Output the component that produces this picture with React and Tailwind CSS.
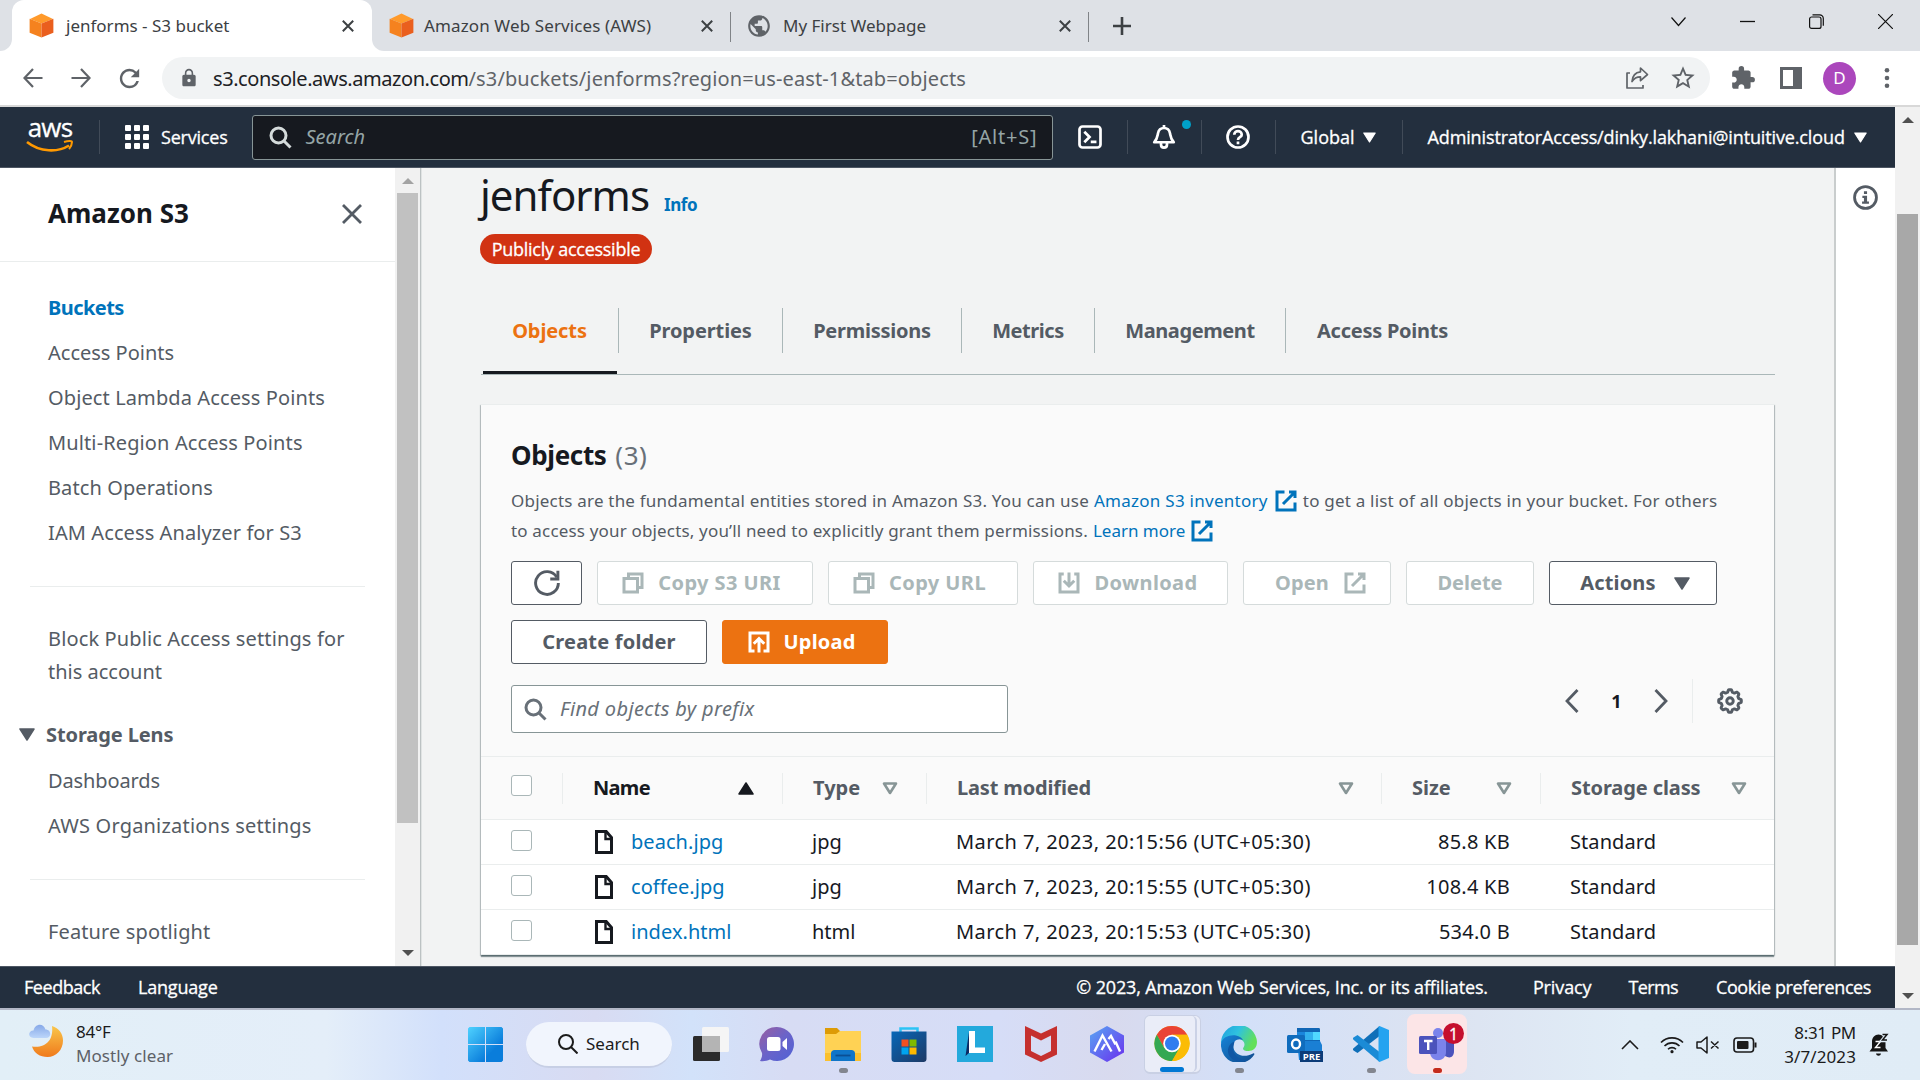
import React from 'react';
import { MdExtension, MdStarBorder, MdLock, MdPublic, MdRefresh } from 'react-icons/md';

/* ---------- icons ---------- */

const Icon = ({ className = 'w-6 h-6', sw = 2, children }) => (
  <svg viewBox="0 0 16 16" className={`shrink-0 ${className}`} fill="none" stroke="currentColor" strokeWidth={sw}>
    {children}
  </svg>
);

const SearchGlyph = ({ className }) => (
  <Icon className={className}>
    <circle cx="7" cy="7" r="5" />
    <path d="m15 15-4.5-4.5" />
  </Icon>
);

const External = ({ className }) => (
  <Icon className={className}>
    <path d="M10 2h4v4M6 10l8-8M14 9.05V14H2V2h5" />
  </Icon>
);

const CopyGlyph = () => (
  <Icon>
    <path d="M2 5h9v9H2z" />
    <path d="M5 5V2h9v9h-3" />
  </Icon>
);

const FileGlyph = () => (
  <Icon className="w-6 h-6 text-[#16191f]">
    <path d="M3 1h6.5L13 5v10H3z" />
    <path d="M9 1v5h4" strokeWidth="1.6" />
  </Icon>
);

const Cube = () => (
  <svg viewBox="0 0 24 24" className="w-[25px] h-[25px] shrink-0">
    <path d="M12 .5 23 5.8 12 10 1 5.8z" fill="#ff9a2b" />
    <path d="M.6 5.5 12 10v13.6L.6 19z" fill="#f5821f" />
    <path d="M23.4 5.5 12 10v13.6L23.4 19z" fill="#ea5f1e" />
  </svg>
);

const TabClose = () => (
  <svg viewBox="0 0 12 12" className="w-3 h-3 shrink-0" stroke="#3c4043" strokeWidth="2">
    <path d="m.8.8 10.4 10.4M11.2.8.8 11.2" />
  </svg>
);

const Caret = ({ className }) => (
  <svg viewBox="0 0 16 13" className={`shrink-0 ${className}`} fill="currentColor" stroke="currentColor" strokeWidth="1.5" strokeLinejoin="round">
    <path d="M1 1h14L8 12z" />
  </svg>
);

const SortIdle = () => (
  <svg viewBox="0 0 16 13" className="w-4 h-[13px] shrink-0 text-[#879596]" fill="none" stroke="currentColor" strokeWidth="2.6" strokeLinejoin="round">
    <path d="M2 1.5h12L8 11z" />
  </svg>
);

const gearPath = (() => {
  const pts = [];
  for (let i = 0; i < 96; i++) {
    const a = (i / 96) * Math.PI * 2;
    const r = 6.25 + 0.75 * Math.tanh(2.4 * Math.cos(8 * a));
    pts.push(`${(8 + r * Math.sin(a)).toFixed(2)} ${(8 - r * Math.cos(a)).toFixed(2)}`);
  }
  return 'M' + pts.join('L') + 'Z';
})();

/* ---------- browser chrome ---------- */

const TabStrip = () => (
  <div className="flex h-[51px] bg-[#dee1e6] font-['Noto_Sans'] text-[17px] text-[#3c4043]">
    <div className="w-3 h-full bg-white">
      <div className="w-3 h-full rounded-br-[12px] bg-[#dee1e6]" />
    </div>
    <div className="flex w-[360px] items-center rounded-t-[12px] bg-white pl-[17px] pr-[18px]">
      <Cube />
      <span className="ml-3 flex-1 whitespace-nowrap">jenforms - S3 bucket</span>
      <TabClose />
    </div>
    <div className="w-3 h-full bg-white">
      <div className="w-3 h-full rounded-bl-[12px] bg-[#dee1e6]" />
    </div>
    <div className="flex w-[346px] items-center pl-[5px] pr-[17px]">
      <Cube />
      <span className="ml-[10px] flex-1 whitespace-nowrap tracking-[0.12px]">Amazon Web Services (AWS)</span>
      <TabClose />
    </div>
    <div className="mt-3 h-[30px] w-px bg-[#808387]" />
    <div className="flex w-[357px] items-center pl-[15px] pr-[17px]">
      <MdPublic className="h-[26px] w-[26px] text-[#5f6368]" />
      <span className="ml-[11px] flex-1 whitespace-nowrap">My First Webpage</span>
      <TabClose />
    </div>
    <div className="mt-3 h-[30px] w-px bg-[#808387]" />
    <svg viewBox="0 0 18 18" className="ml-6 mt-[17px] h-[18px] w-[18px]" stroke="#3c4043" strokeWidth="2.6">
      <path d="M9 0v18M0 9h18" />
    </svg>
    <div className="ml-auto flex items-start gap-[54px] pr-[27px] pt-[14px] text-[#111]">
      <svg viewBox="0 0 15 15" className="h-[15px] w-[15px]" fill="none" stroke="currentColor" strokeWidth="1.2">
        <path d="m.5 3.5 7 8 7-8" />
      </svg>
      <svg viewBox="0 0 15 15" className="h-[15px] w-[15px]" stroke="currentColor" strokeWidth="1.3">
        <path d="M0 7.5h15" />
      </svg>
      <svg viewBox="0 0 15 15" className="h-[15px] w-[15px]" fill="none" stroke="currentColor" strokeWidth="1.2">
        <rect x=".6" y="3" width="11.4" height="11.4" rx="2" />
        <path d="M3.5.8h7.2a3.6 3.6 0 0 1 3.6 3.6v7.4" />
      </svg>
      <svg viewBox="0 0 15 15" className="h-[15px] w-[15px]" stroke="currentColor" strokeWidth="1.2">
        <path d="m0 0 15 15M15 0 0 15" />
      </svg>
    </div>
  </div>
);

const Toolbar = () => (
  <div className="flex h-14 items-center border-b-2 border-[#d8d8d8] bg-white pl-[23px] text-[#5f6368]">
    <svg viewBox="0 0 20 20" className="h-5 w-5" fill="none" stroke="currentColor" strokeWidth="2.2">
      <path d="M19.5 10H1.5M10 1 1.5 10l8.5 9" />
    </svg>
    <svg viewBox="0 0 20 20" className="ml-7 h-5 w-5" fill="none" stroke="currentColor" strokeWidth="2.2">
      <path d="M.5 10h18M10 1l8.500 9-8.500 9" />
    </svg>
    <MdRefresh className="ml-[24px] h-[29px] w-[29px]" />
    <div className="ml-[18px] flex h-[42px] w-[1548px] items-center rounded-full bg-[#f1f3f4] pl-[17px] pr-[13px]">
      <MdLock className="h-[20px] w-[20px]" />
      <div className="ml-[14px] flex-1 whitespace-nowrap pt-px font-['Noto_Sans'] text-[20px] leading-none">
        <span className="text-[#202124] tracking-[-0.44px]">s3.console.aws.amazon.com</span>
        <span className="tracking-[0.12px]">/s3/buckets/jenforms?region=us-east-1&amp;tab=objects</span>
      </div>
      <svg viewBox="0 0 24 24" className="h-6 w-6" fill="none" stroke="currentColor" strokeWidth="1.7" strokeLinejoin="round">
        <path d="M5 7H2v15h16v-3" />
        <path d="M15.500 2 22.500 8.500l-7 6.200v-3.800c-4 0-6.500 1.300-8.500 4.700.3-5 3-9.200 8.500-9.800z" />
      </svg>
      <MdStarBorder className="ml-[20px] h-[28px] w-[28px]" />
    </div>
    <MdExtension className="ml-[20px] h-[26px] w-[26px]" />
    <svg viewBox="0 0 22 22" className="ml-[24px] h-[22px] w-[22px]">
      <path d="M0 0h22v22H0zM3 3v16h10V3z" fill="currentColor" fillRule="evenodd" />
    </svg>
    <div className="ml-[21px] flex h-[33px] w-[33px] items-center justify-center rounded-full bg-[#ab47bc] font-['Noto_Sans'] text-[17px] text-white">D</div>
    <svg viewBox="0 0 6 20" className="ml-[28px] h-5 w-[6px]" fill="currentColor">
      <circle cx="3" cy="2.300" r="2.300" />
      <circle cx="3" cy="10" r="2.300" />
      <circle cx="3" cy="17.700" r="2.300" />
    </svg>
  </div>
);

/* ---------- AWS console ---------- */

const NavDivider = ({ className }) => <div className={`h-[34px] w-px bg-[#414b58] ${className}`} />;

const ConsoleNav = () => (
  <div className="flex h-[61px] items-center border-b border-[#4d5663] bg-[#232f3e] font-['Open_Sans'] text-[18px] font-medium text-white [-webkit-text-stroke:0.3px]">
    <div className="ml-[25px] flex w-[50px] flex-col items-center">
      <span className="h-[19px] font-['Open_Sans'] text-[26px] leading-[13px] tracking-[-0.8px]">aws</span>
      <svg viewBox="0 0 48 13" className="h-[13px] w-12" fill="none" stroke="#ff9900">
        <path d="M1 2c13 10.500 31 10.500 42 3.500" strokeWidth="2.600" />
        <path d="M38 2c5-1.500 8-1 8 0s-.5 4-3 7" strokeWidth="2" />
      </svg>
    </div>
    <NavDivider className="ml-[24px]" />
    <div className="ml-[25px] grid grid-cols-3 gap-[3px]">
      {[...Array(9)].map((_, i) => (
        <div key={i} className="h-[6px] w-[6px] rounded-[1px] bg-white" />
      ))}
    </div>
    <span className="ml-[12px] tracking-[-0.21px]">Services</span>
    <div className="ml-[24px] flex h-[45px] w-[801px] items-center rounded-[3px] border border-[#879596] bg-[#16191f] pl-[15px] pr-[14px] font-normal text-[#95a5a6] [-webkit-text-stroke:0]">
      <SearchGlyph className="h-6 w-6 text-[#d5dbdb]" />
      <span className="ml-[14px] flex-1 font-['Noto_Sans'] text-[20px] italic">Search</span>
      <span className="font-['Noto_Sans'] text-[20px] tracking-[0.8px]">[Alt+S]</span>
    </div>
    <Icon className="ml-[25px] h-6 w-6" sw={1.8}>
      <rect x="1" y="1" width="14" height="14" rx="2" />
      <path d="M4.200 4.500 7.700 8l-3.500 3.500M8.500 11.200h3.800" />
    </Icon>
    <NavDivider className="ml-[25px]" />
    <div className="relative ml-[24px]">
      <Icon sw={1.8}>
        <path d="M8 0v2M1.500 11.500h13C12.500 9.500 12.500 8 12 5.500 11.500 3 10 2 8 2S4.500 3 4 5.500C3.500 8 3.500 9.500 1.500 11.500z" strokeLinejoin="round" />
        <path d="M6 12v1c0 2.800 4 2.800 4 0v-1" />
      </Icon>
      <div className="absolute -top-[5px] left-[30px] h-[9px] w-[9px] rounded-full bg-[#00a1c9]" />
    </div>
    <NavDivider className="ml-[25px]" />
    <Icon className="ml-[24px] h-6 w-6" sw={1.8}>
      <circle cx="8" cy="8" r="7" />
      <path d="M5.500 6.500c0-3.300 5-3.300 5 0C10.500 8.300 8 8 8 10M8 11v1.800" />
    </Icon>
    <NavDivider className="ml-[25px]" />
    <span className="ml-[25px]">Global</span>
    <Caret className="ml-[8px] h-[11px] w-[13px]" />
    <NavDivider className="ml-[26px]" />
    <span className="ml-[25px] whitespace-nowrap tracking-[-0.13px]">AdministratorAccess/dinky.lakhani@intuitive.cloud</span>
    <Caret className="ml-[9px] h-[11px] w-[13px]" />
  </div>
);

const Sidebar = () => (
  <div className="flex h-full w-[422px] shrink-0">
    <div className="h-full w-[395px] overflow-hidden bg-white font-['Noto_Sans'] text-[20px] leading-[33px] text-[#545b64]">
      <div className="flex h-[94px] items-center justify-between border-b border-[#eaeded] pb-[2px] pl-12 pr-[33px]">
        <span className="text-[26px] font-bold text-[#16191f]">Amazon S3</span>
        <svg viewBox="0 0 20 20" className="h-5 w-5" stroke="currentColor" strokeWidth="2.8">
          <path d="m1 1 18 18M19 1 1 19" />
        </svg>
      </div>
      <div className="flex flex-col gap-3 whitespace-nowrap pl-12 pt-[29px]">
        <span className="font-bold tracking-[-0.55px] text-[#0073bb]">Buckets</span>
        <span className="tracking-[0px]">Access Points</span>
        <span className="tracking-[0.11px]">Object Lambda Access Points</span>
        <span className="tracking-[0.12px]">Multi-Region Access Points</span>
        <span className="tracking-[0.1px]">Batch Operations</span>
        <span className="tracking-[0.1px]">IAM Access Analyzer for S3</span>
      </div>
      <div className="mx-[30px] mt-[37px] h-px bg-[#eaeded]" />
      <div className="mt-[35px] w-[330px] pl-12">
        <span className="whitespace-nowrap tracking-[0.13px]">Block Public Access settings for</span> this account
      </div>
      <div className="mt-[30px] flex items-center pl-[19px] font-bold">
        <Caret className="h-[13px] w-4" />
        <span className="ml-[11px] tracking-[-0.1px]">Storage Lens</span>
      </div>
      <div className="mt-[13px] flex flex-col gap-3 whitespace-nowrap pl-12">
        <span className="tracking-[-0.12px]">Dashboards</span>
        <span className="tracking-[0.2px]">AWS Organizations settings</span>
      </div>
      <div className="mx-[30px] mt-[37px] h-px bg-[#eaeded]" />
      <div className="mt-[35px] whitespace-nowrap pl-12 tracking-[0.13px]">Feature spotlight</div>
    </div>
    <div className="flex h-full w-[25px] flex-col items-center bg-[#f1f1f1] pt-[10px]">
      <svg viewBox="0 0 12 6" className="h-[6px] w-3" fill="#a3a3a3">
        <path d="M0 6 6 0l6 6z" />
      </svg>
      <div className="mt-[9px] h-[630px] w-[21px] bg-[#c1c1c1]" />
      <svg viewBox="0 0 12 6" className="mt-[127px] h-[6px] w-3" fill="#505050">
        <path d="M0 0h12L6 6z" />
      </svg>
    </div>
    <div className="h-full w-px bg-[#bcc2c3]" />
    <div className="h-full w-px bg-[#e0e3e3]" />
  </div>
);

const tabs = [
  ['Objects', 'w-[138px] text-[#ec7211] tracking-[-0.1px]'],
  ['Properties', 'w-[164px] tracking-[-0.1px]'],
  ['Permissions', 'w-[179px] tracking-[-0.25px]'],
  ['Metrics', 'w-[133px] tracking-[-0.45px]'],
  ['Management', 'w-[191px] tracking-[-0.4px]'],
  ['Access Points', 'w-[193px] tracking-[-0.26px]'],
];

const Button = ({ className = '', tone = 'disabled', children }) => {
  const tones = {
    disabled: 'border-[#d5dbdb] bg-white text-[#aab7b8]',
    normal: 'border-[#545b64] bg-white text-[#545b64]',
    primary: 'border-[#ec7211] bg-[#ec7211] text-white',
  };
  return (
    <div className={`flex h-[44px] items-center justify-center whitespace-nowrap rounded-[3px] border text-[20px] font-bold ${tones[tone]} ${className}`}>
      {children}
    </div>
  );
};

const Checkbox = () => <div className="h-[21px] w-[21px] rounded-[3px] border-[1.5px] border-[#aab7b8] bg-white" />;

const gridCols = 'grid grid-cols-[81px_220px_144px_455px_159px_1fr]';

const HeadCell = ({ className = '', children }) => (
  <div className={`my-auto flex h-[31px] items-center justify-between border-l border-[#eaeded] pl-[30px] ${className}`}>{children}</div>
);

const rows = [
  ['beach.jpg', 'jpg', 'March 7, 2023, 20:15:56 (UTC+05:30)', '85.8 KB'],
  ['coffee.jpg', 'jpg', 'March 7, 2023, 20:15:55 (UTC+05:30)', '108.4 KB'],
  ['index.html', 'html', 'March 7, 2023, 20:15:53 (UTC+05:30)', '534.0 B'],
];

const ObjectsCard = () => (
  <div className="mt-[29px] w-[1293px] border-t border-[#eaeded] bg-white shadow-[0_2px_1px_0_rgba(0,28,36,0.4),1px_1px_1px_0_rgba(0,28,36,0.2),-1px_1px_1px_0_rgba(0,28,36,0.2)]">
    <div className="h-[351px] bg-[#fafafa] pl-[30px] pt-[32px] text-[#545b64]">
      <div className="text-[26px] leading-[36px]">
        <span className="font-bold tracking-[-0.35px] text-[#16191f]">Objects</span>{' '}
        <span className="ml-[2px] tracking-[0.5px] text-[#687078]">(3)</span>
      </div>
      <div className="mt-[13px] whitespace-nowrap text-[17px] leading-[30px]">
        <div className="flex items-center">
          <span className="tracking-[0.21px]">Objects are the fundamental entities stored in Amazon S3. You can use</span>
          <span className="ml-[5px] tracking-[0.27px] text-[#0073bb]">Amazon S3 inventory</span>
          <External className="ml-[6px] h-6 w-6 text-[#0073bb]" />
          <span className="ml-[5px] tracking-[0.21px]">to get a list of all objects in your bucket. For others</span>
        </div>
        <div className="flex items-center">
          <span className="tracking-[0.17px]">to access your objects, you’ll need to explicitly grant them permissions.</span>
          <span className="ml-[5px] text-[#0073bb]">Learn more</span>
          <External className="ml-[5px] h-6 w-6 text-[#0073bb]" />
        </div>
      </div>
      <div className="mt-[15px] flex gap-[15px]">
        <Button tone="normal" className="w-[71px]">
          <Icon className="h-[26px] w-[26px]" sw={1.8}>
            <path d="M10 5.500h4.700V.500" />
            <path d="M15 8a7 7 0 1 1-1-3.600" />
          </Icon>
        </Button>
        <Button className="w-[216px] gap-[13px] pr-[8px] tracking-[0.42px]"><CopyGlyph />Copy S3 URI</Button>
        <Button className="w-[190px] gap-[13px] pr-[8px] tracking-[0.42px]"><CopyGlyph />Copy URL</Button>
        <Button className="w-[195px] gap-[14px] pr-[7px] tracking-[0.38px]">
          <Icon>
            <path d="M4.500 2H2v12h12V2h-2.500M8 1v9M4.500 6.500 8 10l3.500-3.500" />
          </Icon>
          Download
        </Button>
        <Button className="w-[148px] gap-[14px] pl-[8px] tracking-[0.15px]">Open<External className="h-6 w-6" /></Button>
        <Button className="w-[128px]">Delete</Button>
        <Button tone="normal" className="w-[168px] gap-[18px] pl-[4px] tracking-[0.16px]">Actions<Caret className="h-[13px] w-4" /></Button>
      </div>
      <div className="mt-[15px] flex gap-[15px]">
        <Button tone="normal" className="w-[196px] tracking-[0.2px]">Create folder</Button>
        <Button tone="primary" className="w-[166px] gap-[13px] pr-[8px] tracking-[0.19px]">
          <Icon>
            <path d="M5 14H2V2h12v12h-3M8 15V6M4.500 9.200 8 5.700l3.500 3.500" />
          </Icon>
          Upload
        </Button>
      </div>
      <div className="mt-[21px] flex h-[48px]">
        <div className="flex h-[48px] w-[497px] items-center rounded-[3px] border border-[#879596] bg-white pl-[11px] text-[20px] italic tracking-[0.36px] text-[#687078]">
          <SearchGlyph className="h-6 w-6 text-[#687078]" />
          <span className="ml-[13px]">Find objects by prefix</span>
        </div>
        <div className="ml-[557px] flex h-[32px] items-center">
          <svg viewBox="0 0 14 24" className="h-6 w-[14px]" fill="none" stroke="#545b64" strokeWidth="2.800">
            <path d="M12.500 1 2 12l10.500 11" />
          </svg>
          <span className="w-[75px] text-center text-[18px] font-bold text-[#16191f]">1</span>
          <svg viewBox="0 0 14 24" className="h-6 w-[14px]" fill="none" stroke="#545b64" strokeWidth="2.800">
            <path d="M1.500 1 12 12 1.500 23" />
          </svg>
          <div className="ml-[24px] h-[44px] w-px bg-[#eaeded]" />
          <Icon className="ml-[24px] h-[26px] w-[26px] text-[#545b64]" sw={1.8}>
            <path d={gearPath} strokeLinejoin="round" />
            <circle cx="8" cy="8" r="2" />
          </Icon>
        </div>
      </div>
    </div>
    <div className={`${gridCols} h-[64px] border-y border-[#eaeded] bg-[#fafafa] text-[20px] font-bold text-[#545b64]`}>
      <div className="flex items-center pb-[6px] pl-[30px]"><Checkbox /></div>
      <HeadCell className="pr-[28px] text-[#16191f]">
        <span className="tracking-[-0.7px]">Name</span>
        <Caret className="h-[13px] w-4 rotate-180" />
      </HeadCell>
      <HeadCell className="pr-[28px]">Type<SortIdle /></HeadCell>
      <HeadCell className="pr-[27px]"><span className="tracking-[-0.15px]">Last modified</span><SortIdle /></HeadCell>
      <HeadCell className="pr-[28px]">Size<SortIdle /></HeadCell>
      <HeadCell className="pr-[27px]"><span className="tracking-[-0.1px]">Storage class</span><SortIdle /></HeadCell>
    </div>
    {rows.map(([name, type, date, size]) => (
      <div key={name} className={`${gridCols} h-[45px] items-center whitespace-nowrap border-b border-[#eaeded] text-[20px] text-[#16191f]`}>
        <div className="pb-[3px] pl-[30px]"><Checkbox /></div>
        <div className="flex items-center pl-[30px]">
          <FileGlyph />
          <span className="ml-[15px] tracking-[0.05px] text-[#0073bb]">{name}</span>
        </div>
        <div className="pl-[30px]">{type}</div>
        <div className="pl-[30px] tracking-[0.43px]">{date}</div>
        <div className="pr-[30px] text-right tracking-[0.25px]">{size}</div>
        <div className="pl-[30px] tracking-[0.07px]">Standard</div>
      </div>
    ))}
  </div>
);

const Main = () => (
  <div className="h-full w-[1412px] shrink-0 bg-[#f2f3f3] pl-[59px] font-['Noto_Sans']">
    <div className="flex items-baseline pt-[3px]">
      <h1 className="-ml-px text-[42px] leading-[48px] tracking-[-1.010px] text-[#16191f]">jenforms</h1>
      <span className="ml-[15px] text-[17px] font-bold tracking-[-0.4px] text-[#0073bb]">Info</span>
    </div>
    <div className="-ml-px mt-[15px] flex h-[30px] w-[172px] items-center justify-center whitespace-nowrap rounded-full bg-[#d13212] font-['Open_Sans'] text-[18px] font-medium tracking-[-0.26px] text-white [-webkit-text-stroke:0.3px]">
      Publicly accessible
    </div>
    <div className="mt-[35px] flex h-[76px] w-[1294px] border-b border-[#aab7b8] pt-[9px] text-[20px] font-bold text-[#545b64]">
      {tabs.map(([label, cls], i) => (
        <div key={label} className={`flex flex-col items-center ${cls}`}>
          <div className={`flex h-[45px] w-full items-center justify-center ${i < 5 ? 'border-r border-[#aab7b8]' : ''}`}>{label}</div>
          {i === 0 && <div className="mt-[18px] h-[3px] w-[134px] bg-[#16191f]" />}
        </div>
      ))}
    </div>
    <ObjectsCard />
  </div>
);

const Console = () => (
  <div className="flex h-[901px]">
    <div className="flex w-[1895px] flex-col">
      <ConsoleNav />
      <div className="flex h-[798px]">
        <Sidebar />
        <Main />
        <div className="flex flex-1 justify-center border-l-2 border-[#c9cdcd] bg-white pt-[17px] text-[#545b64]">
          <Icon className="h-[25px] w-[25px]" sw={1.8}>
            <circle cx="8" cy="8" r="7" />
            <path d="M7 4h2v1.700H7zM6 6.800h3v3.700h1.200V12H5.800v-1.500H7V8.300H6z" fill="currentColor" stroke="none" />
          </Icon>
        </div>
      </div>
      <div className="flex h-[42px] items-center whitespace-nowrap border-t border-[#4d5663] bg-[#232f3e] pl-6 pr-6 font-['Open_Sans'] text-[18px] font-medium text-white [-webkit-text-stroke:0.3px]">
        <span className="tracking-[-0.45px]">Feedback</span>
        <span className="ml-[38px] tracking-[-0.2px]">Language</span>
        <span className="ml-auto tracking-[-0.16px]">© 2023, Amazon Web Services, Inc. or its affiliates.</span>
        <span className="ml-[45px] tracking-[-0.12px]">Privacy</span>
        <span className="ml-[37px] tracking-[-0.62px]">Terms</span>
        <span className="ml-[38px] tracking-[-0.4px]">Cookie preferences</span>
      </div>
    </div>
    <div className="flex w-[25px] flex-col items-center bg-[#f1f1f1] pt-[10px]">
      <svg viewBox="0 0 12 6" className="h-[6px] w-3" fill="#505050">
        <path d="M0 6 6 0l6 6z" />
      </svg>
      <div className="mt-[91px] h-[731px] w-[21px] bg-[#a8a8a8]" />
      <svg viewBox="0 0 12 6" className="mt-[48px] h-[6px] w-3" fill="#505050">
        <path d="M0 0h12L6 6z" />
      </svg>
    </div>
  </div>
);

/* ---------- taskbar ---------- */

const Slot = ({ dot, children }) => (
  <div className="flex h-full w-[66px] flex-col items-center pt-4">
    <div className="h-[36px] w-[36px]">{children}</div>
    {dot && <div className={`mt-[6px] h-[5px] rounded-full ${dot}`} />}
  </div>
);

const Svg = ({ children }) => <svg viewBox="0 0 36 36" className="h-9 w-9">{children}</svg>;

const Chrome = () => (
  <Svg>
    <circle cx="18" cy="18" r="18" fill="#fbbc05" />
    <path d="M18 9h15.590A18 18 0 0 0 2.410 9l7.800 13.500z" fill="#ea4335" />
    <path d="M10.200 22.500 2.410 9A18 18 0 0 0 18 36l7.800-13.500z" fill="#34a853" />
    <path d="M25.800 22.500 18 36A18 18 0 0 0 33.590 9H18z" fill="#fbbc05" />
    <circle cx="18" cy="18" r="9" fill="#fff" />
    <circle cx="18" cy="18" r="7.200" fill="#2f7def" />
  </Svg>
);

const Taskbar = () => (
  <div className="flex h-[72px] border-t-2 border-[#b2b7c6] bg-[linear-gradient(90deg,#e2eff7_0%,#e4eef9_17%,#d2e0fb_23%,#d8dbf2_31%,#d2e2fa_36%,#d7dcf4_41%,#d6ddf7_52%,#d8daee_58%,#d3e0f8_65%,#dce3f1_75%,#e1edf7_85%,#e0ecf6_100%)] font-['Noto_Sans'] text-[17px] text-[#1b1b1b]">
    <div className="flex w-[468px] pl-[28px] pt-[10px]">
      <svg viewBox="0 0 36 40" className="mt-[2px] h-10 w-9">
        <defs>
          <linearGradient id="moon" x1="0" y1="0" x2="0" y2="1">
            <stop offset="0" stopColor="#f9c64a" />
            <stop offset="1" stopColor="#f07a1c" />
          </linearGradient>
          <linearGradient id="cloud" x1="0" y1="0" x2="0" y2="1">
            <stop offset="0" stopColor="#86a8e8" />
            <stop offset="1" stopColor="#bcd6fa" />
          </linearGradient>
        </defs>
        <path d="M24 4c7 2 11 8 11 14.500C35 28 28 35 19.500 35 12 35 6 31 4 24.500c12 2 22-5 20-20.500z" fill="url(#moon)" />
        <path d="M5.500 16C-.5 16 0 8.500 5.500 8.500 7 1.500 15.500.500 17.500 7.500c6 0 6.500 8.500.500 8.500z" fill="url(#cloud)" />
      </svg>
      <div className="ml-3 whitespace-nowrap">
        <div className="leading-[24px] tracking-[-0.2px]">84°F</div>
        <div className="leading-[24px] tracking-[0.08px] text-[#5d6167]">Mostly clear</div>
      </div>
    </div>
    <div className="w-[58px] pt-[17px]">
      <svg viewBox="0 0 35 35" className="h-[35px] w-[35px]">
        <defs>
          <linearGradient id="win" x1="0" y1="0" x2="1" y2="1">
            <stop offset="0" stopColor="#4fd2ff" />
            <stop offset=".7" stopColor="#0a7ddb" />
          </linearGradient>
        </defs>
        <path d="M1.500 0H17v17H0V1.500zM18 0h15.500L35 1.500V17H18zM0 18h17v17H1.500L0 33.500zM18 18h17v15.500L33.500 35H18z" fill="url(#win)" />
      </svg>
    </div>
    <div className="mr-[6px] mt-[12px] flex h-[46px] w-[146px] items-center rounded-full border-b-2 border-[#c7cfe5] bg-[#f1f5fd] pl-8">
      <svg viewBox="0 0 20 20" className="h-5 w-5" fill="none" stroke="#1b1b1b" strokeWidth="2">
        <circle cx="8" cy="8" r="7" />
        <path d="m13 13 6.500 6.500" />
      </svg>
      <span className="ml-[8px]">Search</span>
    </div>
    <Slot>
      <Svg>
        <rect x="0" y="10" width="27" height="25" rx="1.500" fill="#2b2b2b" />
        <rect x="9" y="1" width="27" height="25" rx="1.500" fill="#f5f5f5" />
        <path d="M9 10h18v16H9z" fill="#b4b4b4" />
      </Svg>
    </Slot>
    <Slot>
      <Svg>
        <defs>
          <linearGradient id="chat" x1="0" y1="0" x2="1" y2="1">
            <stop offset="0" stopColor="#9a5fa0" />
            <stop offset=".5" stopColor="#6a63c9" />
            <stop offset="1" stopColor="#4f62d6" />
          </linearGradient>
        </defs>
        <path d="M18 1a17 17 0 1 1-7 32.500c-3 1.500-6.500 2-10 1.500 1.500-2.500 2.500-5 2-8A17 17 0 0 1 18 1z" fill="url(#chat)" />
        <rect x="8" y="11" width="13.500" height="14" rx="2.500" fill="#fff" />
        <path d="m23.500 16 4.500-4v12l-4.500-4z" fill="#fff" />
      </Svg>
    </Slot>
    <Slot dot="w-[9px] bg-[#83868f]">
      <Svg>
        <path d="M0 2h12l3.500 3.500L12 9H0z" fill="#dd9b06" />
        <path d="M0 8h11l4-3h21v30H0z" fill="#ffd254" />
        <path d="M0 27h36v8H0z" fill="#fbc02d" />
        <path d="M6 35v-7.500c0-2 1.500-3.500 3.500-3.500h17c2 0 3.500 1.500 3.500 3.500V35z" fill="#0f75c8" />
        <path d="M10.500 29.500h15" stroke="#0a4f94" strokeWidth="1.800" />
      </Svg>
    </Slot>
    <Slot>
      <Svg>
        <defs>
          <linearGradient id="store" x1="0" y1="0" x2="1" y2="1">
            <stop offset="0" stopColor="#0767b8" />
            <stop offset="1" stopColor="#1e3a66" />
          </linearGradient>
        </defs>
        <path d="M9.500 7V2.500h17V7" fill="none" stroke="#2cc3f5" strokeWidth="2.500" />
        <path d="M.5 5.500h35V33c0 1.700-1.300 3-3 3h-29c-1.700 0-3-1.300-3-3z" fill="url(#store)" />
        <path d="M10.500 13.500h7v7h-7z" fill="#f25022" />
        <path d="M18.500 13.500h7v7h-7z" fill="#7fba00" />
        <path d="M10.500 21.500h7v7h-7z" fill="#00a4ef" />
        <path d="M18.500 21.500h7v7h-7z" fill="#ffb900" />
      </Svg>
    </Slot>
    <Slot>
      <Svg>
        <path d="M0 0h36v36H0z" fill="#23a9dc" />
        <path d="m12 6-3.500 24 3.500-3z" fill="#0b2a63" />
        <path d="M12 5h6v16.500h10V27H12z" fill="#fff" />
      </Svg>
    </Slot>
    <Slot>
      <Svg>
        <path d="m2 0 16 7.500L34 0v28.500L18 36 2 28.500zM8 9.500V25l10 5 10-5V9.500l-10 5z" fill="#c5302e" fillRule="evenodd" />
      </Svg>
    </Slot>
    <Slot>
      <Svg>
        <defs>
          <linearGradient id="hex" x1="0" y1="0" x2="1" y2="1">
            <stop offset="0" stopColor="#59a6f3" />
            <stop offset="1" stopColor="#6a2fee" />
          </linearGradient>
        </defs>
        <path d="m18 0 17 9.500v17L18 36 1 26.500v-17z" fill="url(#hex)" />
        <path d="m5.500 25.500 8-16 9 16M12.500 24l3.500-6M19.500 13l2.500-3 4.500 8.500M26.500 15.500l4.500 10" fill="none" stroke="#fff" strokeWidth="2.400" />
      </Svg>
    </Slot>
    <div className="ml-[4px] flex h-full w-[62px] pt-[5px]">
      <div className="flex h-[59px] w-[57px] rounded-[6px] border border-b-2 border-[#c9d0e4] bg-[#eaedf8]">
        <div className="flex w-[52px] shrink-0 flex-col items-center rounded-[5px] border-r-2 border-[#cbd2e6] pl-[4px] pt-[10px]">
          <Chrome />
          <div className="mt-[6px] h-[5px] w-[24px] rounded-full bg-[#0078d4]" />
        </div>
      </div>
    </div>
    <Slot dot="w-[9px] bg-[#83868f]">
      <Svg>
        <defs>
          <linearGradient id="edgeA" x1="0" y1="0" x2="1" y2=".4">
            <stop offset="0" stopColor="#1f9fe0" />
            <stop offset=".5" stopColor="#2fc2df" />
            <stop offset="1" stopColor="#62e05a" />
          </linearGradient>
          <linearGradient id="edgeB" x1="0" y1="0" x2="1" y2="1">
            <stop offset="0" stopColor="#1683d8" />
            <stop offset="1" stopColor="#114a8b" />
          </linearGradient>
        </defs>
        <path d="M0 18A18 18 0 0 1 36 16c0 6-4 9-8.500 9-4 0-6.500-1.500-5-3.500 2.500-3.500 0-8-4.500-8.500C9 12 2 14 0 18z" fill="url(#edgeA)" />
        <path d="M0 18c1-7 9-9.500 15-8.500 3.500.5 6 2.500 7 4.500-6-2.500-11 2-9.500 8C14 29 23 32.500 32 27.500c1-.5 2 0 1 1.500A18 18 0 0 1 0 18z" fill="url(#edgeB)" />
        <path d="M12.500 20c-2 8 6 15 14 14-13 5-22-4-19-12.500 1-3 3-5 6-6z" fill="#0f57a5" />
      </Svg>
    </Slot>
    <Slot>
      <Svg>
        <path d="M10 2h21.500c1 0 1.500.5 1.500 1.500V18H10z" fill="#1066b5" />
        <path d="M10 6h8v10h-8z" fill="#1a86dc" />
        <path d="M18 6h8v8h-8z" fill="#32b0ee" />
        <path d="M26 6h7v8h-7z" fill="#50d9ff" />
        <path d="M10 15h23l2 4v15H12z" fill="#1a7fd4" />
        <rect x="0" y="9" width="18" height="18" rx="1.500" fill="#0f6cbd" />
        <ellipse cx="9" cy="18" rx="4" ry="4.500" fill="none" stroke="#fff" strokeWidth="2.400" />
        <path d="M13 25h23v11H13z" fill="#0c3c78" />
        <text x="24.500" y="34" fontFamily="Open Sans" fontWeight="700" fontSize="9.500" fill="#fff" textAnchor="middle">PRE</text>
      </Svg>
    </Slot>
    <Slot dot="w-[9px] bg-[#83868f]">
      <Svg>
        <path d="M26.500 0v10L4.500 27 .5 24.500c-.8-.7-.8-1.500 0-2.200z" fill="#0f6fb8" />
        <path d="M26.500 36V26L4.500 9 .5 11.500c-.8.7-.8 1.500 0 2.200z" fill="#1b8bd6" />
        <path d="M26.500 0 36 4v28l-9.500 4-1-1V1z" fill="#25a3f0" />
      </Svg>
    </Slot>
    <div className="relative mx-[3px] mt-1 flex h-[60px] w-[60px] flex-col items-center rounded-[8px] bg-[#fce5e7] pt-3">
      <Svg>
        <circle cx="19" cy="7" r="5" fill="#7b83eb" />
        <path d="M26 14h9v11c0 6-4 8-9 5z" fill="#4b53bc" />
        <path d="M11 13h16v13c0 11-16 11-16 0z" fill="#7b83eb" />
        <rect x="0" y="10" width="18" height="18" rx="1.500" fill="#4b53bc" />
        <path d="M5 15h8.500M9.200 15v9" stroke="#fff" strokeWidth="2.400" />
      </Svg>
      <div className="mt-[6px] h-[5px] w-[9px] rounded-full bg-[#c42b1c]" />
      <div className="absolute left-[36px] top-[9px] flex h-[21px] w-[21px] items-center justify-center rounded-full bg-[#c50f2e] font-['Open_Sans'] text-[16px] font-medium leading-none text-white [-webkit-text-stroke:0.3px]">1</div>
    </div>
    <div className="ml-auto flex h-full items-center pr-[30px]">
      <svg viewBox="0 0 18 10" className="h-[10px] w-[18px]" fill="none" stroke="currentColor" strokeWidth="1.600">
        <path d="m1 9 8-8 8 8" />
      </svg>
      <svg viewBox="0 0 24 18" className="ml-[21px] h-[18px] w-6" fill="none" stroke="currentColor" strokeWidth="1.600">
        <path d="M1 6.500a15.500 15.500 0 0 1 22 0M4.500 10a10.500 10.500 0 0 1 15 0M8 13.300a5.700 5.700 0 0 1 8 0" />
        <circle cx="12" cy="15.700" r="1.600" fill="currentColor" stroke="none" />
      </svg>
      <svg viewBox="0 0 24 18" className="ml-[12px] h-[18px] w-6" fill="none" stroke="currentColor" strokeWidth="1.500" strokeLinejoin="round">
        <path d="M1 6h4l6-5v16l-6-5H1zM15 5.500l7.500 7M22.500 5.500l-7.500 7" />
      </svg>
      <svg viewBox="0 0 24 16" className="ml-[13px] h-4 w-6" fill="none" stroke="currentColor" strokeWidth="1.600">
        <rect x="1" y="1" width="19.500" height="14" rx="3" />
        <rect x="4" y="4" width="11.500" height="8" rx="1" fill="currentColor" stroke="none" />
        <path d="M22.500 5.500v5" strokeWidth="2" />
      </svg>
      <div className="ml-[24px] w-[75px] whitespace-nowrap text-right">
        <div className="leading-[24px] tracking-[-0.3px]">8:31 PM</div>
        <div className="leading-[24px] tracking-[0.1px]">3/7/2023</div>
      </div>
      <svg viewBox="0 0 21 24" className="ml-[13px] h-6 w-[21px]">
        <path d="M3 8.500C3 4.500 6 1.500 9.500 1.500s7 3 7 7V15l2.500 3.500H.5L3 15z" fill="#151515" />
        <path d="M7 20.500h5c-.5 3-4.500 3-5 0z" fill="#151515" />
        <path d="M6.500 8.500h5l-5 6h5" fill="none" stroke="#fff" strokeWidth="1.400" />
        <path d="M13 1.500h5l-5 6h5" fill="none" stroke="#e0ecf6" strokeWidth="3.500" />
        <path d="M13.500 1.500h4.500l-4.500 5.500H18" fill="none" stroke="#151515" strokeWidth="1.500" />
      </svg>
    </div>
  </div>
);

export default function App() {
  return (
    <div className="h-[1080px] w-[1920px] overflow-hidden bg-white">
      <TabStrip />
      <Toolbar />
      <Console />
      <Taskbar />
    </div>
  );
}
